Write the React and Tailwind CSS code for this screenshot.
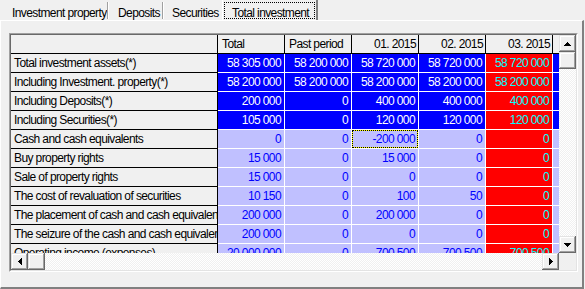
import React from 'react';

const columns = [
  { title: 'Total', right: false },
  { title: 'Past period', right: false },
  { title: '01. 2015', right: true },
  { title: '02. 2015', right: true },
  { title: '03. 2015', right: true },
];

const rows = [
  { label: 'Total investment assets(*)', summary: true, values: ['58 305 000', '58 200 000', '58 720 000', '58 720 000', '58 720 000'] },
  { label: 'Including Investment. property(*)', summary: true, values: ['58 200 000', '58 200 000', '58 200 000', '58 200 000', '58 200 000'] },
  { label: 'Including Deposits(*)', summary: true, values: ['200 000', '0', '400 000', '400 000', '400 000'] },
  { label: 'Including Securities(*)', summary: true, values: ['105 000', '0', '120 000', '120 000', '120 000'] },
  { label: 'Cash and cash equivalents', values: ['0', '0', '-200 000', '0', '0'], focus: 2 },
  { label: 'Buy property rights', values: ['15 000', '0', '15 000', '0', '0'] },
  { label: 'Sale of property rights', values: ['15 000', '0', '0', '0', '0'] },
  { label: 'The cost of revaluation of securities', values: ['10 150', '0', '100', '50', '0'] },
  { label: 'The placement of cash and cash equivalents', values: ['200 000', '0', '200 000', '0', '0'] },
  { label: 'The seizure of the cash and cash equivalents', values: ['200 000', '0', '0', '0', '0'] },
  { label: 'Operating income (expenses)', values: ['20 000 000', '0', '700 500', '700 500', '700 500'] },
];

// pixel arrows like the classic scrollbar glyphs
const Arrow = ({ dir }) => {
  const up = [[3, 0, 1], [2, 1, 3], [1, 2, 5], [0, 3, 7]];
  const isVert = dir === 'up' || dir === 'down';
  const rects = up.map(([x, y, w], i) => {
    const yy = dir === 'down' ? 3 - y : y;
    if (isVert) return <rect key={i} x={x} y={yy} width={w} height={1} />;
    const xx = dir === 'right' ? 3 - y : y;
    return <rect key={i} x={xx} y={x} width={1} height={w} />;
  });
  return (
    <svg width={isVert ? 7 : 4} height={isVert ? 4 : 7} shapeRendering="crispEdges" fill="#000">
      {rects}
    </svg>
  );
};

const btn = 'w-[17px] h-[17px] shrink-0 bg-[#f0f0f0] flex items-center justify-center shadow-[inset_-1px_-1px_0_#696969,inset_1px_1px_0_#e3e3e3,inset_-2px_-2px_0_#a0a0a0,inset_2px_2px_0_#ffffff]';
const track = 'bg-[repeating-conic-gradient(#f0f0f0_0%_25%,#ffffff_0%_50%)] bg-[length:2px_2px]';

const Sep = () => <div className="mt-[2px] h-[17px] w-[2px] shrink-0 border-l border-[#a0a0a0] bg-white" />;

export default function App() {
  return (
    <div className="w-[585px] h-[289px] bg-[#f0f0f0] overflow-hidden text-[12px] tracking-[-0.6px] text-black font-['Liberation_Sans',Arial,sans-serif]">
      {/* tab strip */}
      <div className="flex h-[20px] pl-[12px]">
        <div className="w-[95px] shrink-0 pt-[5px] leading-[16px] whitespace-nowrap">Investment property</div>
        <Sep />
        <div className="ml-[9px] w-[44px] shrink-0 pt-[5px] leading-[16px] whitespace-nowrap">Deposits</div>
        <Sep />
        <div className="ml-[8px] w-[50px] shrink-0 pt-[5px] leading-[16px] whitespace-nowrap">Securities</div>
        <div className="w-[96px] h-[20px] shrink-0 border-l border-white border-r-2 border-r-[#808080] pl-[1px] pr-[1px] pt-[2px]">
          <div className="h-[17px] border border-dotted border-black pl-[7px] pt-[2px] leading-[16px] whitespace-nowrap">Total investment</div>
        </div>
      </div>

      {/* page */}
      <div className="w-[584px] h-[269px] border-t border-l border-white border-r-2 border-b-2 border-r-[#808080] border-b-[#808080] pl-[8px] pt-[12px]">
        <div className="w-[569px] h-[239px] border border-t-[#a0a0a0] border-l-[#a0a0a0] border-r-white border-b-white">
          <div className="w-full h-full border border-t-[#696969] border-l-[#696969] border-r-[#e3e3e3] border-b-[#e3e3e3] flex flex-col">
            <div className="flex h-[218px] shrink-0">
              <div className="w-[548px] h-full overflow-hidden shrink-0">
                {/* header */}
                <div className="flex h-[19px]">
                  <div className="w-[207px] shrink-0 border-r border-b border-black bg-[#f0f0f0]" />
                  {columns.map((c) => (
                    <div
                      key={c.title}
                      className={`w-[67px] shrink-0 border-r border-b border-black bg-[#f0f0f0] leading-[18px] whitespace-nowrap overflow-hidden ${c.right ? 'text-right pr-[2px]' : 'pl-[4px]'}`}
                    >
                      {c.title}
                    </div>
                  ))}
                  <div className="w-[67px] shrink-0 border-r border-b border-black bg-[#f0f0f0]" />
                </div>

                {rows.map((r) => (
                  <div key={r.label} className="flex h-[19px]">
                    <div className="w-[207px] shrink-0 border-r border-b border-black bg-[#f0f0f0] pl-[3px] leading-[18px] whitespace-nowrap overflow-hidden">
                      {r.label}
                    </div>
                    {r.values.map((v, i) => {
                      const red = i === 4;
                      const color = red
                        ? 'bg-[#ff0000] text-[#00ffff]'
                        : r.summary
                        ? 'bg-[#0000ff] text-white'
                        : 'bg-[#c0c0ff] text-[#0000ff]';
                      const focused = r.focus === i;
                      return (
                        <div key={i} className={`w-[67px] h-[19px] shrink-0 border-r border-b border-white ${color}`}>
                          <div
                            className={`h-[18px] text-right whitespace-nowrap overflow-hidden ${
                              focused
                                ? 'border border-[#ffff00] outline-1 outline-dotted outline-black -outline-offset-1 leading-[16px] pr-[2px]'
                                : 'leading-[18px] pr-[3px]'
                            }`}
                          >
                            {v}
                          </div>
                        </div>
                      );
                    })}
                    <div className={`w-[67px] shrink-0 border-r border-b border-white ${r.summary ? 'bg-[#0000ff]' : 'bg-[#c0c0ff]'}`} />
                  </div>
                ))}
              </div>

              {/* vertical scrollbar */}
              <div className="w-[17px] h-full flex flex-col shrink-0">
                <div className={btn}><Arrow dir="up" /></div>
                <div className={btn} />
                <div className={`flex-1 ${track}`} />
                <div className={btn}><Arrow dir="down" /></div>
              </div>
            </div>

            {/* horizontal scrollbar */}
            <div className="flex h-[17px] shrink-0">
              <div className="w-[548px] flex shrink-0">
                <div className={btn}><Arrow dir="left" /></div>
                <div className={btn} />
                <div className={`flex-1 ${track}`} />
                <div className={btn}><Arrow dir="right" /></div>
              </div>
              <div className="w-[17px] bg-[#f0f0f0]" />
            </div>
          </div>
        </div>
      </div>
    </div>
  );
}
